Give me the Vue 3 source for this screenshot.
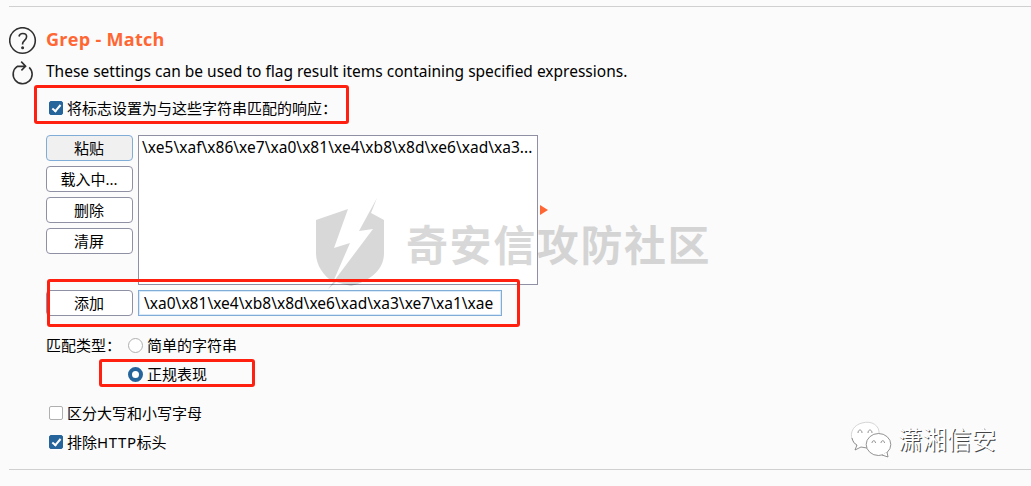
<template>
    <div class="page">
        <section class="panel">
            <div class="icons">
                <svg class="help" width="28" height="28" viewBox="0 0 28 28">
                    <circle cx="13.500" cy="13.500" r="12.8"/>
                    <path d="M10 9.500C10.400 7.200 12 6.500 13.800 6.500c2.400 0 3.800 1.300 3.800 3.200 0 3.400-4 3.800-4 7.100v.7"/>
                    <circle class="dot" cx="13.600" cy="20.700" r="1.5"/>
                </svg>
                <svg class="reload" width="24" height="26" viewBox="0 0 24 26">
                    <path d="M6.200 6.400A9.500 9.500 0 1 0 18.200 7.300"/>
                    <path d="M6 6.400H14.500M10.200 1.600l4.400 4.600-4.200 4.200"/>
                </svg>
            </div>
            <div class="content">
                <h2><span>Grep - Match</span></h2>
                <p class="desc"><span>These settings can be used to flag result items containing specified expressions.</span></p>
                <label class="option flag">
                    <input v-model="form.flag" type="checkbox"/>
                    <span>将标志设置为与这些字符串匹配的响应：</span>
                </label>
                <div class="list-row">
                    <div class="buttons">
                        <button v-for="(name, i) in actions" :key="name" type="button" :class="{hovered: i === 0}">{{ name }}</button>
                    </div>
                    <div class="list"><span>{{ item }}</span></div>
                    <i class="arrow"></i>
                </div>
                <div class="add-row">
                    <button type="button">添加</button>
                    <div class="field"><span>{{ expression }}</span></div>
                </div>
                <div class="types">
                    <span class="types-label">匹配类型：</span>
                    <div>
                        <label v-for="type in types" :key="type.value" class="option">
                            <input v-model="form.type" type="radio" :value="type.value"/>
                            <span>{{ type.text }}</span>
                        </label>
                    </div>
                </div>
                <div class="checks">
                    <label class="option">
                        <input v-model="form.caseSensitive" type="checkbox"/>
                        <span>区分大写和小写字母</span>
                    </label>
                    <label class="option">
                        <input v-model="form.excludeHeaders" type="checkbox"/>
                        <span>排除<span class="latin">HTTP</span>标头</span>
                    </label>
                </div>
            </div>
        </section>

        <div class="watermark">
            <svg width="72" height="92" viewBox="0 0 72 92">
                <path d="M1 22L33 11L19 50L35 45L18 84C8 77 1 67 1 55Z"/>
                <path d="M62 0L56 15L69 22V55C69 72 55 83 36 88L21 84L13 91L58 31L44 33Z"/>
            </svg>
            <span>奇安信攻防社区</span>
        </div>

        <div class="mark mark-flag"></div>
        <div class="mark mark-add"></div>
        <div class="mark mark-type"></div>

        <div class="wechat">
            <svg width="42" height="38" viewBox="0 0 42 38">
                <path class="faint" d="M7 25C-2 18 0 5 12 2C22-1 30 5 29 13"/>
                <path d="M2 17C3 21 5 23 7 24L5 29L11 26L17 27"/>
                <ellipse cx="28.5" cy="23.5" rx="12.3" ry="11"/>
                <path d="M32 34L38 36L37 31M8 12c0-4 4-4 4 0M18 12c0-4 4-4 4 0M22 22c0-3 3.500-3 3.500 0M31 22c0-3 3.500-3 3.500 0"/>
            </svg>
            <span>潇湘信安</span>
        </div>
    </div>
</template>

<style>
    body{
        background: #fbfbfb;
    }
</style>

<style scoped>
    .page{
        position: relative;
        height: 486px;
        overflow: hidden;
        box-sizing: border-box;
        padding: 6px 0 0 9px;
        font: 15px/20px "Noto Sans", "Noto Sans CJK SC", sans-serif;
        color: #000;
    }
    .panel{
        display: flex;
        height: 462px;
        border-top: 1px solid #d0d0d0;
        border-bottom: 1px solid #d0d0d0;
    }
    .icons{
        width: 37px;
        padding-top: 20px;
    }
    .icons svg{
        display: block;
        fill: none;
        stroke: #303030;
        stroke-width: 1.6;
    }
    .icons .dot{
        fill: #303030;
        stroke: none;
    }
    .reload{
        margin: 5px 0 0 2px;
    }
    h2{
        height: 24px;
        margin: 20px 0 0;
        font: bold 18px/24px "Open Sans", sans-serif;
        letter-spacing: 0.3px;
        color: #ff6633;
    }
    .desc{
        height: 24px;
        margin: 8px 0 0;
        font-size: 15.5px;
        line-height: 24px;
        white-space: nowrap;
    }
    .option{
        display: flex;
        align-items: center;
        height: 20px;
        white-space: nowrap;
    }
    .flag{
        margin: 15px 0 17px 3px;
    }
    input{
        appearance: none;
        flex: none;
        width: 14px;
        height: 14px;
        margin: 0 4px 0 0;
        border: 1px solid #b0b0b0;
        border-radius: 2px;
        background: #fff;
    }
    input[type="checkbox"]:checked{
        border-color: #26659c;
        background: #26659c;
    }
    input[type="checkbox"]:checked::before{
        content: '';
        display: block;
        width: 3px;
        height: 7px;
        margin: 0.5px 0 0 4px;
        border: solid #fff;
        border-width: 0 2px 2px 0;
        transform: rotate(40deg);
    }
    input[type="radio"]{
        width: 15px;
        height: 15px;
        border-radius: 50%;
    }
    input[type="radio"]:checked{
        border: 4px solid #26659c;
    }
    .list-row, .add-row{
        display: flex;
        gap: 5px;
    }
    .buttons{
        display: flex;
        flex-direction: column;
        gap: 5px;
    }
    button{
        width: 87px;
        height: 26px;
        padding: 0 1px 0 0;
        border: 1px solid #9090a4;
        border-radius: 4px;
        background: #fff;
        color: #000;
        font: inherit;
    }
    button.hovered{
        border-color: #80acd8;
        background: #f0f0f0;
    }
    .list{
        width: 400px;
        height: 150px;
        box-sizing: border-box;
        padding: 1px 3px;
        border: 1px solid #9090a4;
        background: #fff;
        font-size: 15.5px;
        letter-spacing: 0.03px;
        white-space: nowrap;
    }
    .arrow{
        align-self: center;
        margin-left: -3px;
        border: solid transparent;
        border-width: 5px 0 5px 8px;
        border-left-color: #ff6633;
    }
    .add-row{
        margin-top: 5px;
    }
    .field{
        width: 364px;
        height: 26px;
        box-sizing: border-box;
        padding: 2px 5px;
        border: 1px solid #80acd8;
        box-shadow: inset 0 0 0 1px #d9e9f7;
        background: #fff;
        font-size: 15.5px;
        letter-spacing: 0.02px;
        white-space: nowrap;
    }
    .types{
        display: flex;
        margin-top: 19px;
    }
    .types-label{
        width: 82px;
        white-space: nowrap;
    }
    .types .option + .option{
        margin-top: 9px;
    }
    .checks{
        margin: 19px 0 0 3px;
    }
    .checks .option + .option{
        margin-top: 9px;
    }
    .latin{
        letter-spacing: 0.6px;
    }
    .watermark{
        position: absolute;
        left: 315px;
        top: 198px;
        display: flex;
        color: #000;
        opacity: 0.15;
    }
    .watermark svg{
        fill: currentColor;
    }
    .watermark span{
        margin: 15px 0 0 19px;
        font: bold 42px/60px "Noto Sans CJK SC", sans-serif;
        letter-spacing: 1.6px;
        white-space: nowrap;
    }
    .mark{
        position: absolute;
        box-sizing: border-box;
        border: 3px solid #ff2010;
        border-radius: 3px;
    }
    .mark-flag{
        left: 34px;
        top: 85px;
        width: 315px;
        height: 39px;
    }
    .mark-add{
        left: 47px;
        top: 279px;
        width: 473px;
        height: 48px;
    }
    .mark-type{
        left: 99px;
        top: 359px;
        width: 156px;
        height: 28px;
    }
    .wechat{
        position: absolute;
        left: 850px;
        top: 421px;
        display: flex;
    }
    .wechat svg{
        fill: #fff;
        stroke: #777;
        stroke-width: 0.8;
    }
    .wechat .faint{
        stroke: #ccc;
    }
    .wechat span{
        margin-left: 6px;
        font: 24.5px/36px "Noto Sans CJK SC", sans-serif;
        color: #fff;
        text-shadow: 1px 1px 0 #444;
        white-space: nowrap;
    }
</style>

<script setup>
    import {reactive} from 'vue';

    const actions = ['粘贴', '载入中...', '删除', '清屏'];
    const types = [
        {value: 'simple', text: '简单的字符串'},
        {value: 'regex', text: '正规表现'}
    ];
    const item = '\\xe5\\xaf\\x86\\xe7\\xa0\\x81\\xe4\\xb8\\x8d\\xe6\\xad\\xa3...';
    const expression = '\\xa0\\x81\\xe4\\xb8\\x8d\\xe6\\xad\\xa3\\xe7\\xa1\\xae';

    const form = reactive({
        flag: true,
        type: 'regex',
        caseSensitive: false,
        excludeHeaders: true
    });
</script>
